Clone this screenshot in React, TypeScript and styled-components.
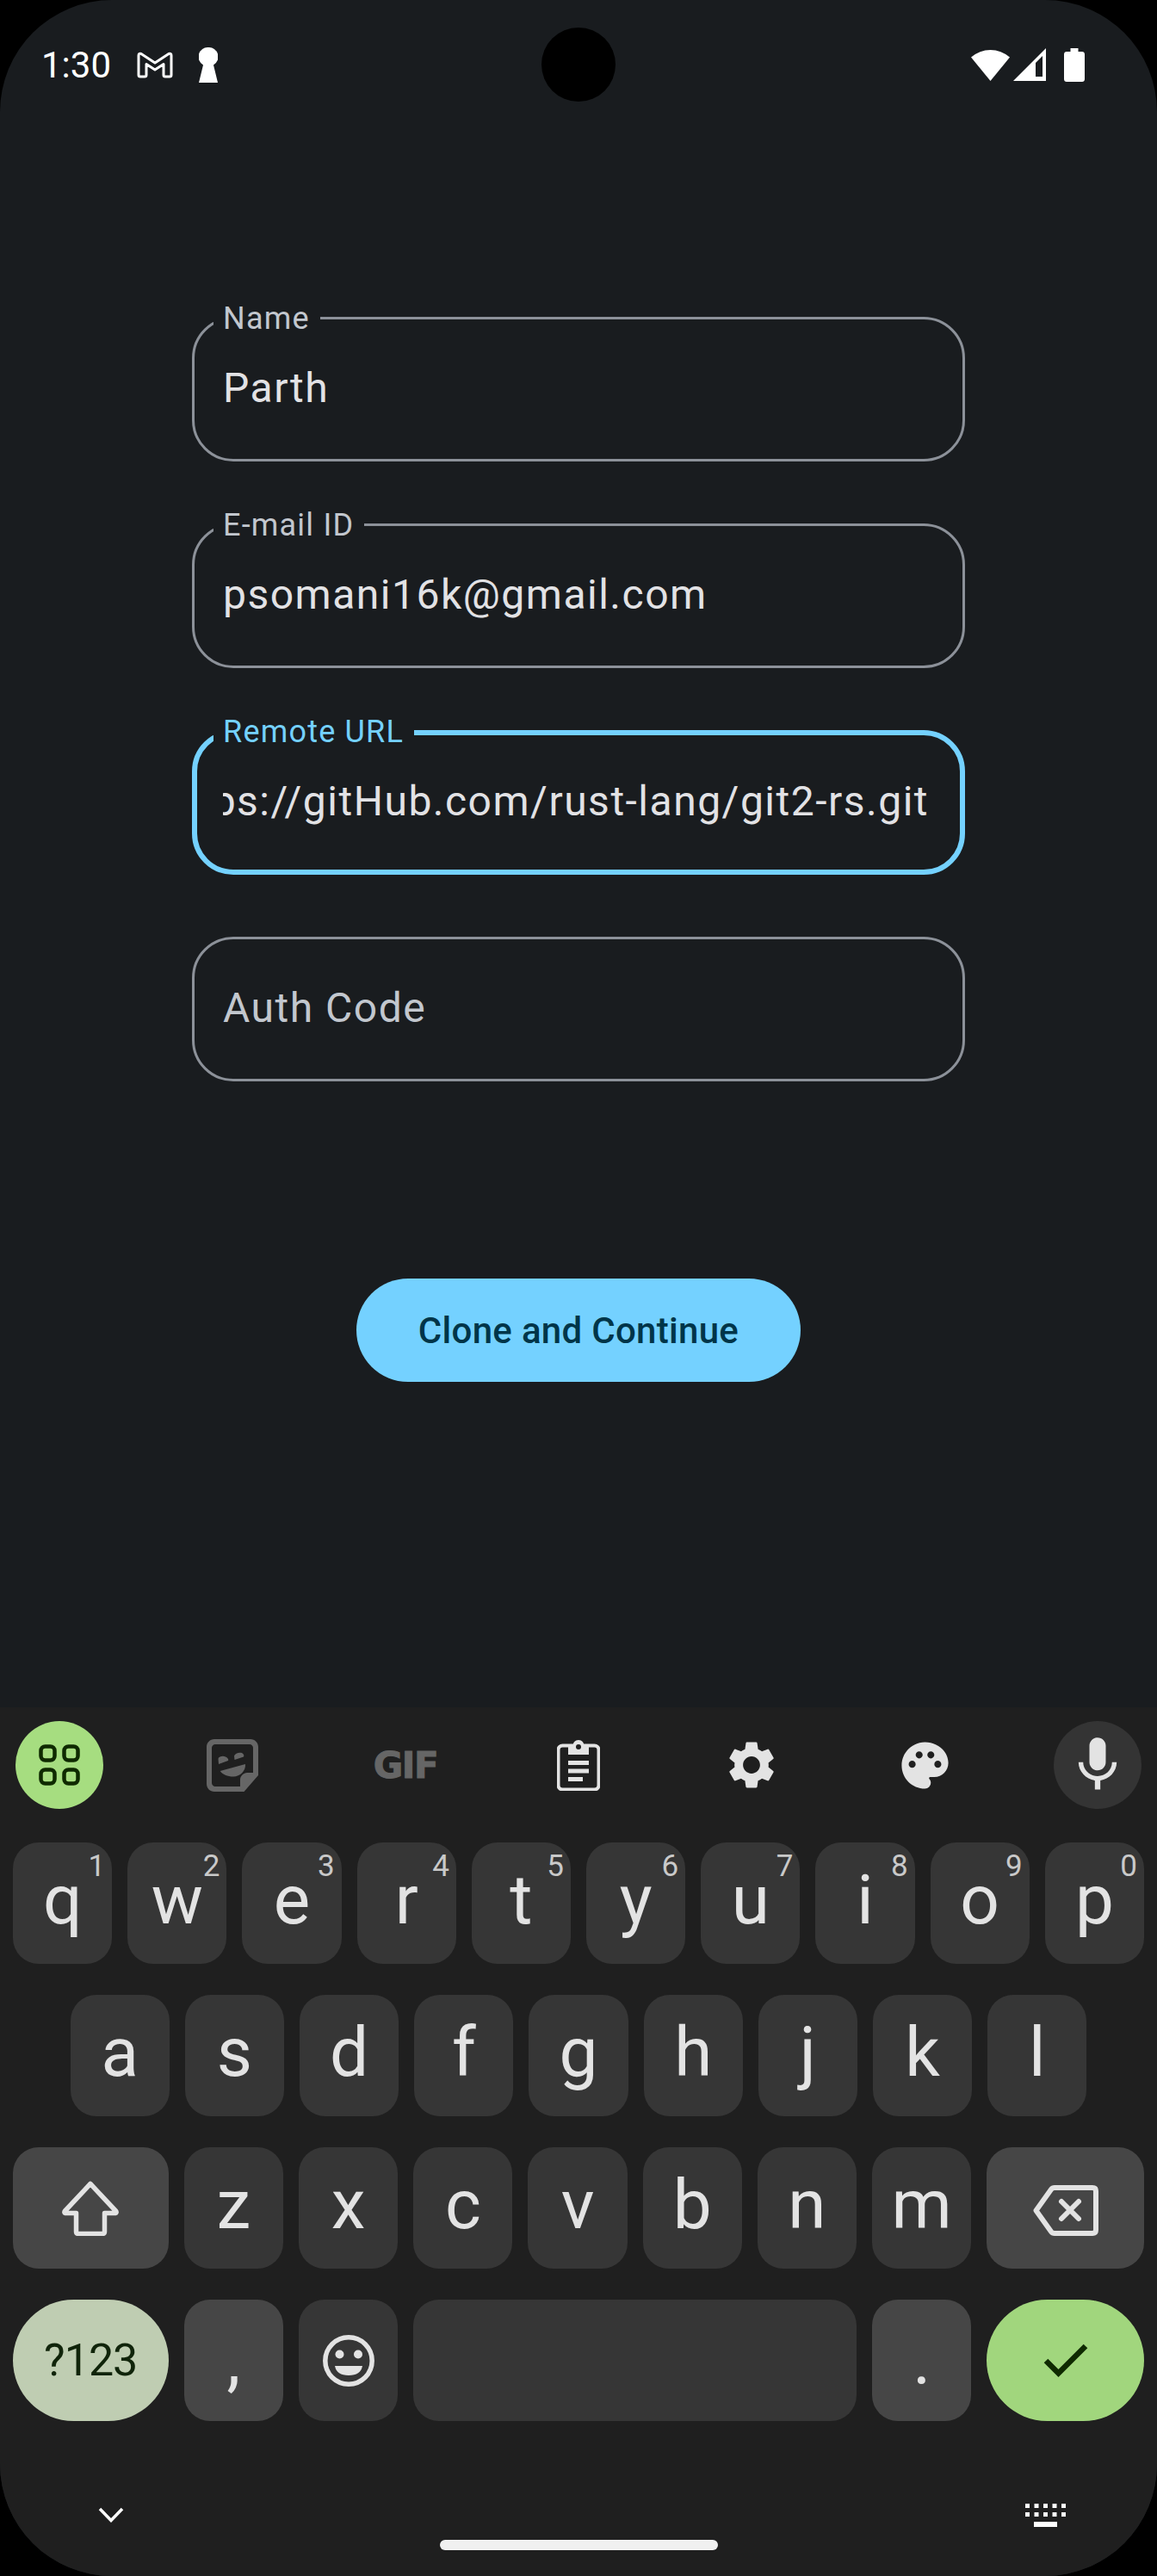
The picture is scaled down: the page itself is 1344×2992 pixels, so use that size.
import React from "react";
import styled, { createGlobalStyle } from "styled-components";
import { MdMic, MdPalette, MdSettings } from "react-icons/md";

const GlobalStyle = createGlobalStyle`
  html, body {
    margin: 0;
    padding: 0;
    background: #000;
  }
  * {
    box-sizing: border-box;
  }
`;

const FIELDS = [
  { label: "Name", value: "Parth" },
  { label: "E-mail ID", value: "psomani16k@gmail.com" },
];

const TOP_ROW = [
  ["q", "1"],
  ["w", "2"],
  ["e", "3"],
  ["r", "4"],
  ["t", "5"],
  ["y", "6"],
  ["u", "7"],
  ["i", "8"],
  ["o", "9"],
  ["p", "0"],
];
const MIDDLE_ROW = ["a", "s", "d", "f", "g", "h", "j", "k", "l"];
const BOTTOM_ROW = ["z", "x", "c", "v", "b", "n", "m"];

const App = () => {
  return (
    <Screen>
      <GlobalStyle />
      <Camera />
      <StatusBar>
        <StatusGroup $gap={30}>
          <Clock>1:30</Clock>
          <GmailIcon />
          <KeyholeIcon />
        </StatusGroup>
        <StatusGroup $gap={4}>
          <WifiIcon />
          <SignalIcon />
          <BatteryIcon />
        </StatusGroup>
      </StatusBar>

      <Form>
        {FIELDS.map((field) => (
          <Field key={field.label}>
            <FieldLabel>{field.label}</FieldLabel>
            <FieldValue>{field.value}</FieldValue>
          </Field>
        ))}
        <Field $focused>
          <FieldLabel $focused>Remote URL</FieldLabel>
          <FieldValue $clipStart>https://gitHub.com/rust-lang/git2-rs.git</FieldValue>
        </Field>
        <Field>
          <Placeholder>Auth Code</Placeholder>
        </Field>
      </Form>

      <CloneButton>Clone and Continue</CloneButton>

      <Keyboard>
        <Toolbar>
          <ToolCircle $tone="green">
            <GridIcon />
          </ToolCircle>
          <ToolCircle>
            <StickerIcon />
          </ToolCircle>
          <ToolCircle>
            <GifLabel>GIF</GifLabel>
          </ToolCircle>
          <ToolCircle>
            <ClipboardIcon />
          </ToolCircle>
          <ToolCircle>
            <MdSettings size={66} color="#e3e3e3" />
          </ToolCircle>
          <ToolCircle>
            <MdPalette size={65} color="#e3e3e3" />
          </ToolCircle>
          <ToolCircle $tone="dark">
            <MdMic size={76} color="#e3e3e3" />
          </ToolCircle>
        </Toolbar>

        <Keys>
          <KeyRow>
            {TOP_ROW.map(([letter, hint]) => (
              <Key key={letter}>
                <Hint>{hint}</Hint>
                {letter}
              </Key>
            ))}
          </KeyRow>
          <KeyRow>
            {MIDDLE_ROW.map((letter) => (
              <Key key={letter}>{letter}</Key>
            ))}
          </KeyRow>
          <KeyRow>
            <Key $width={181} $tone="fn" $centered>
              <ShiftIcon />
            </Key>
            {BOTTOM_ROW.map((letter) => (
              <Key key={letter}>{letter}</Key>
            ))}
            <Key $width={183} $tone="fn" $centered>
              <BackspaceIcon />
            </Key>
          </KeyRow>
          <KeyRow>
            <Key $width={181} $tone="symbols" $centered>
              ?123
            </Key>
            <Key $tone="fn" $centered>
              ,
            </Key>
            <Key $centered>
              <EmojiIcon />
            </Key>
            <Key $width={515} />
            <Key $tone="fn" $centered>
              .
            </Key>
            <Key $width={183} $tone="enter" $centered>
              <CheckIcon />
            </Key>
          </KeyRow>
        </Keys>

        <NavRow>
          <ChevronIcon />
          <KeyboardIcon />
        </NavRow>
        <HomeIndicator />
      </Keyboard>
    </Screen>
  );
};

const GmailIcon = () => (
  <svg width="42" height="31" viewBox="0 0 42 31" fill="none">
    <path
      d="M2 27V4.500Q2 1.500 5 2.500L21 13L37 2.500Q40 1.500 40 4.500V27Q40 29 38 29H33Q31 29 31 27V14.500L21 21L11 14.500V27Q11 29 9 29H4Q2 29 2 27Z"
      stroke="#fff"
      strokeWidth="3"
      strokeLinejoin="round"
    />
  </svg>
);

const KeyholeIcon = () => (
  <svg width="22" height="41" viewBox="0 0 22 41">
    <path
      d="M11 0A11 11 0 0 1 17 20.500L22 41H0L5 20.500A11 11 0 0 1 11 0Z"
      fill="#fff"
    />
  </svg>
);

const WifiIcon = () => (
  <svg width="45" height="38" viewBox="0 0 45 38">
    <path d="M22.500 38L0 10.500A34 34 0 0 1 45 10.500Z" fill="#fff" />
  </svg>
);

const SignalIcon = () => (
  <svg width="55" height="38" viewBox="0 0 55 38">
    <path
      fillRule="evenodd"
      d="M0 38L38 0V38ZM26 33H34V9L26 17Z"
      fill="#fff"
    />
  </svg>
);

const BatteryIcon = () => (
  <svg width="24" height="39" viewBox="0 0 24 39">
    <path
      d="M7.500 0H16.500V4H21C22.700 4 24 5.300 24 7V36C24 37.700 22.700 39 21 39H3C1.300 39 0 37.700 0 36V7C0 5.300 1.300 4 3 4H7.500Z"
      fill="#fff"
    />
  </svg>
);

const GridIcon = () => (
  <svg width="48" height="48" viewBox="0 0 48 48" fill="none" stroke="#0f2a00" strokeWidth="4.500">
    <rect x="2.500" y="2.500" width="16" height="16" rx="5" />
    <rect x="29.500" y="2.500" width="16" height="16" rx="5" />
    <rect x="2.500" y="29.500" width="16" height="16" rx="5" />
    <rect x="29.500" y="29.500" width="16" height="16" rx="5" />
  </svg>
);

const StickerIcon = () => (
  <svg width="60" height="61" viewBox="0 0 60 61" fill="#666">
    <path
      fillRule="evenodd"
      d="M9 0H51C56 0 60 4 60 9V42L43.500 61H9C4 61 0 57 0 52V9C0 4 4 0 9 0ZM10 6C8 6 6 8 6 10V51C6 53 8 55 10 55H39V47C39 43 43 39 47 39H54V10C54 8 52 6 50 6Z"
    />
    <path d="M13.500 23C14 20 19 19 22 20.500C25 21.500 25.700 24 25 25L14 29Z" />
    <path d="M32 19.500C33 16 38 15 41 16C43 17 43.800 19 43 20.500L32.500 24Z" />
    <path d="M15.700 37L45 29C45.500 37 39 43.500 31 43.500C24 43.500 18.500 41 15.700 37Z" />
  </svg>
);

const ClipboardIcon = () => (
  <svg width="50" height="60" viewBox="0 0 50 60" fill="none" stroke="#e3e3e3">
    <rect x="1.500" y="7.500" width="47" height="51" rx="5" strokeWidth="4" />
    <path d="M13 8H18.500C18.500 4 21 1 25 1S31.500 4 31.500 8H37V18H13Z" fill="#e3e3e3" stroke="none" />
    <circle cx="25" cy="9" r="3" fill="#1f1f1f" stroke="none" />
    <path d="M13 25H37V30H13ZM13 34.500H37V39.500H13ZM13 44H30V49H13Z" fill="#e3e3e3" stroke="none" />
  </svg>
);

const ShiftIcon = () => (
  <svg width="66" height="64" viewBox="0 0 66 64" fill="none">
    <path
      d="M33 3.500L62.500 35Q64 37 62 37.500H49.500V59Q49.500 61.500 47 61.500H19Q16.500 61.500 16.500 59V37.500H4Q2 37 3.500 35Z"
      stroke="#e3e3e3"
      strokeWidth="5.500"
      strokeLinejoin="round"
    />
  </svg>
);

const BackspaceSvg = styled.svg`
  margin-top: 5px;
`;

const BackspaceIcon = () => (
  <BackspaceSvg width="76" height="59" viewBox="0 0 76 59" fill="none" stroke="#e3e3e3" strokeWidth="6">
    <path
      d="M25 3H69Q73 3 73 7V52Q73 56 69 56H25Q22.500 56 21 54L3.500 29.500L21 5Q22.500 3 25 3Z"
      strokeLinejoin="round"
    />
    <path d="M33 19L53 39M53 19L33 39" strokeLinecap="round" />
  </BackspaceSvg>
);

const EmojiIcon = () => (
  <svg width="60" height="60" viewBox="0 0 60 60" fill="#e3e3e3">
    <circle cx="30" cy="30" r="27.200" fill="none" stroke="#e3e3e3" strokeWidth="5.500" />
    <circle cx="19.500" cy="22.500" r="5" />
    <circle cx="41" cy="22.500" r="5" />
    <path d="M14 36H46Q44 47 30 47Q16 47 14 36Z" />
  </svg>
);

const CheckIcon = () => (
  <svg width="52" height="40" viewBox="0 0 52 40" fill="none">
    <path d="M3 20L17.500 34.500L49 3" stroke="#0f2a00" strokeWidth="6.500" />
  </svg>
);

const ChevronIcon = () => (
  <svg width="30" height="18" viewBox="0 0 30 18" fill="none">
    <path d="M2 2L15 15.500L28 2" stroke="#fff" strokeWidth="3.500" />
  </svg>
);

const KeyboardIcon = () => (
  <svg width="47" height="27" viewBox="0 0 47 27" fill="#fff">
    <path d="M0 0H5V5H0ZM10.500 0H15.500V5H10.500ZM21 0H26V5H21ZM31.500 0H36.500V5H31.500ZM42 0H47V5H42Z" />
    <path d="M0 10H5V15H0ZM10.500 10H15.500V15H10.500ZM21 10H26V15H21ZM31.500 10H36.500V15H31.500ZM42 10H47V15H42Z" />
    <path d="M10 21H37V27H10Z" />
  </svg>
);

export default App;

const Screen = styled.div`
  position: relative;
  display: flex;
  flex-direction: column;
  width: 1344px;
  height: 2992px;
  overflow: hidden;
  border-radius: 130px;
  background: #191c1f;
  font-family: Roboto, "Liberation Sans", sans-serif;
`;

const Camera = styled.div`
  position: absolute;
  top: 32px;
  left: 629px;
  width: 86px;
  height: 86px;
  border-radius: 50%;
  background: #000;
`;

const StatusBar = styled.div`
  display: flex;
  align-items: center;
  justify-content: space-between;
  height: 150px;
  padding: 0 84px 0 48px;
`;

const StatusGroup = styled.div<{ $gap: number }>`
  display: flex;
  align-items: center;
  gap: ${(p) => p.$gap}px;
`;

const Clock = styled.span`
  color: #fff;
  font-size: 42px;
`;

const Form = styled.div`
  display: flex;
  flex-direction: column;
  gap: 72px;
  width: 898px;
  margin: 218px auto 0;
`;

const Field = styled.div<{ $focused?: boolean }>`
  position: relative;
  display: flex;
  align-items: center;
  height: 168px;
  padding: 0 ${(p) => (p.$focused ? "36px 3px 30px" : "33px 3px")};
  border: ${(p) => (p.$focused ? "6px solid #74d1ff" : "3px solid #8c9199")};
  border-radius: 48px;
`;

const FieldLabel = styled.label<{ $focused?: boolean }>`
  position: absolute;
  top: ${(p) => (p.$focused ? "-6px" : "-3px")};
  left: ${(p) => (p.$focused ? "19px" : "22px")};
  transform: translateY(-50%) translateY(2px);
  padding: 0 12px 0 11px;
  background: #191c1f;
  color: ${(p) => (p.$focused ? "#74d1ff" : "#c2c7ce")};
  font-size: 36px;
  line-height: 40px;
  letter-spacing: 1.2px;
`;

const FieldValue = styled.div<{ $clipStart?: boolean }>`
  display: flex;
  flex: 1;
  justify-content: ${(p) => (p.$clipStart ? "flex-end" : "flex-start")};
  overflow: hidden;
  color: #e2e2e5;
  font-size: 48px;
  letter-spacing: 1.5px;
  white-space: nowrap;
`;

const Placeholder = styled.div`
  color: #c2c7ce;
  font-size: 48px;
  letter-spacing: 1.5px;
`;

const CloneButton = styled.button`
  align-self: center;
  width: 516px;
  height: 120px;
  margin-top: 229px;
  padding: 0;
  border: none;
  border-radius: 60px;
  background: #74d1ff;
  color: #003549;
  font-family: inherit;
  font-size: 42px;
  font-weight: 500;
  letter-spacing: 0.3px;
`;

const Keyboard = styled.div`
  display: flex;
  flex-direction: column;
  height: 1009px;
  margin-top: auto;
  background: #1f1f1f;
`;

const Toolbar = styled.div`
  display: flex;
  justify-content: space-between;
  padding: 16px 18px 0;
`;

const ToolCircle = styled.div<{ $tone?: "green" | "dark" }>`
  display: flex;
  align-items: center;
  justify-content: center;
  width: 102px;
  height: 102px;
  border-radius: 50%;
  background: ${(p) =>
    p.$tone === "green"
      ? "#a6dd80"
      : p.$tone === "dark"
      ? "#343434"
      : "transparent"};
`;

const GifLabel = styled.span`
  color: #666;
  font-family: "DejaVu Sans", sans-serif;
  font-size: 42px;
  font-weight: 700;
  letter-spacing: -1.5px;
  -webkit-text-stroke: 1px #666;
`;

const Keys = styled.div`
  display: flex;
  flex-direction: column;
  gap: 36px;
  margin-top: 39px;
  padding: 0 15px;
`;

const KeyRow = styled.div`
  display: flex;
  justify-content: center;
  gap: 18px;
  height: 141px;
`;

const KEY_BACKGROUNDS = {
  letter: "#363636",
  fn: "#464646",
  symbols: "#bfcdb2",
  enter: "#a1d67d",
};

const Key = styled.div<{
  $width?: number;
  $tone?: keyof typeof KEY_BACKGROUNDS;
  $centered?: boolean;
}>`
  position: relative;
  display: flex;
  flex: 0 0 ${(p) => p.$width || 115.2}px;
  align-items: center;
  justify-content: center;
  padding-bottom: ${(p) => (p.$centered ? "0" : "8px")};
  border-radius: ${(p) =>
    p.$tone === "symbols" || p.$tone === "enter" ? "71px" : "30px"};
  background: ${(p) => KEY_BACKGROUNDS[p.$tone || "letter"]};
  color: ${(p) => (p.$tone === "symbols" ? "#10240a" : "#e3e3e3")};
  font-size: ${(p) => (p.$tone === "symbols" ? "52px" : "80px")};
  letter-spacing: ${(p) => (p.$tone === "symbols" ? "-1px" : "0")};
  line-height: 1;
`;

const Hint = styled.span`
  position: absolute;
  top: 10px;
  right: 8px;
  color: #c9c9c9;
  font-size: 35px;
  line-height: 1;
`;

const NavRow = styled.div`
  display: flex;
  align-items: center;
  justify-content: space-between;
  height: 34px;
  margin-top: 92px;
  padding: 0 106px 0 114px;
`;

const HomeIndicator = styled.div`
  align-self: center;
  width: 323px;
  height: 12px;
  margin-top: 12px;
  border-radius: 6px;
  background: #f0f0f0;
`;
